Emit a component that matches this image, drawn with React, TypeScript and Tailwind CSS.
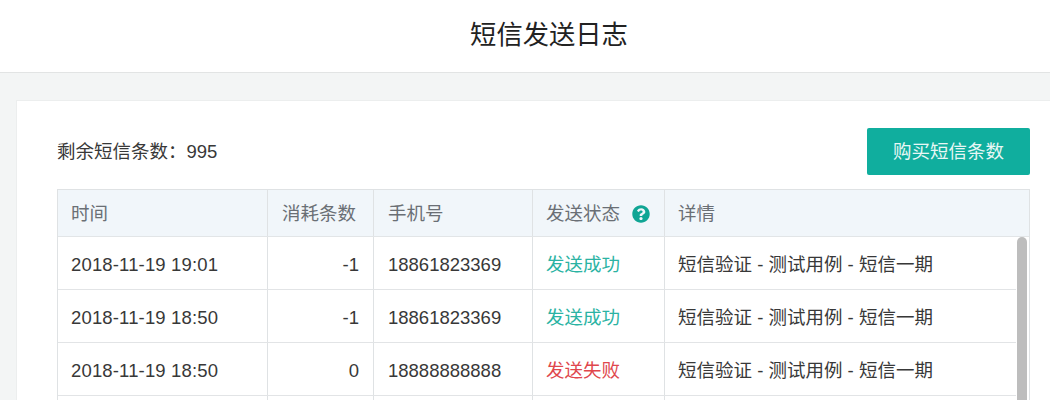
import React from "react";
import { FaQuestionCircle } from "react-icons/fa";

const rows = [
  { time: "2018-11-19 19:01", used: "-1", phone: "18861823369", status: "发送成功", ok: true, detail: "短信验证 - 测试用例 - 短信一期" },
  { time: "2018-11-19 18:50", used: "-1", phone: "18861823369", status: "发送成功", ok: true, detail: "短信验证 - 测试用例 - 短信一期" },
  { time: "2018-11-19 18:50", used: "0", phone: "18888888888", status: "发送失败", ok: false, detail: "短信验证 - 测试用例 - 短信一期" },
  { time: "", used: "", phone: "", status: "", ok: true, detail: "" },
];

const grid = "grid grid-cols-[210px_106px_159px_132px_1fr]";
const font = "font-['Liberation_Sans','Noto_Sans_CJK_SC',sans-serif]";

export default function App() {
  return (
    <div className={`h-[400px] w-[1050px] overflow-hidden bg-[#f3f5f5] ${font} antialiased`}>
      <header className="flex h-[73px] items-center justify-center border-b border-[#e2e4e4] bg-white pb-0.5 pl-[48px] text-[26.3px] leading-none text-[#222]">
        短信发送日志
      </header>
      <main className="ml-[16px] mt-[27px] border border-r-0 border-[#eceeee] bg-white pl-[40px] pr-[20px] pt-[27px]">
        <div className="flex h-[47px] items-center justify-between">
          <span className="pt-[2px] text-[18.5px] leading-none text-[#383838]">剩余短信条数：995</span>
          <button className="flex h-[47px] w-[163px] items-center justify-center rounded-[2px] bg-[#10ae9e] pt-[2px] text-[18.5px] leading-none text-[#e8f7f5]">
            购买短信条数
          </button>
        </div>
        <div className="relative mt-[14px] border border-[#dfe2e4] text-[18.5px] leading-none">
          <div className={`${grid} h-[47px] border-b border-[#e2e5e7] bg-[#f1f6fa] text-[#6a6f75]`}>
            <div className="flex items-center border-r border-[#dfe2e4] pl-[13px] pt-[2px]">时间</div>
            <div className="flex items-center justify-end border-r border-[#dfe2e4] pr-[17px] pt-[2px]">消耗条数</div>
            <div className="flex items-center border-r border-[#dfe2e4] pl-[14px] pt-[2px]">手机号</div>
            <div className="flex items-center gap-[12px] border-r border-[#dfe2e4] pl-[13px] pt-[2px]">
              <span>发送状态</span>
              <FaQuestionCircle className="h-[18px] w-[18px] text-[#10a594]" />
            </div>
            <div className="flex items-center pl-[13px] pt-[2px]">详情</div>
          </div>
          <div className="h-[400px]">
            {rows.map((r, i) => (
              <div key={i} className={`${grid} mr-[13px] h-[53px] border-b border-[#e2e4e6] text-[#383838]`}>
                <div className="flex items-center border-r border-[#dfe2e4] pl-[13px] pt-[4px] tracking-[0.15px]">{r.time}</div>
                <div className="flex items-center justify-end border-r border-[#dfe2e4] pr-[14px] pt-[4px]">{r.used}</div>
                <div className="flex items-center border-r border-[#dfe2e4] pl-[14px] pt-[4px]">{r.phone}</div>
                <div
                  className={`flex items-center border-r border-[#dfe2e4] pl-[13px] pt-[4px] ${
                    r.ok ? "text-[#2bb3a3]" : "text-[#e0474c]"
                  }`}
                >
                  {r.status}
                </div>
                <div className="flex items-center pl-[13px] pt-[4px]">{r.detail}</div>
              </div>
            ))}
          </div>
          <div className="absolute right-[2px] top-[47px] h-[300px] w-[10px] rounded-t-[5px] bg-[#bdbdbd]" />
        </div>
      </main>
    </div>
  );
}
